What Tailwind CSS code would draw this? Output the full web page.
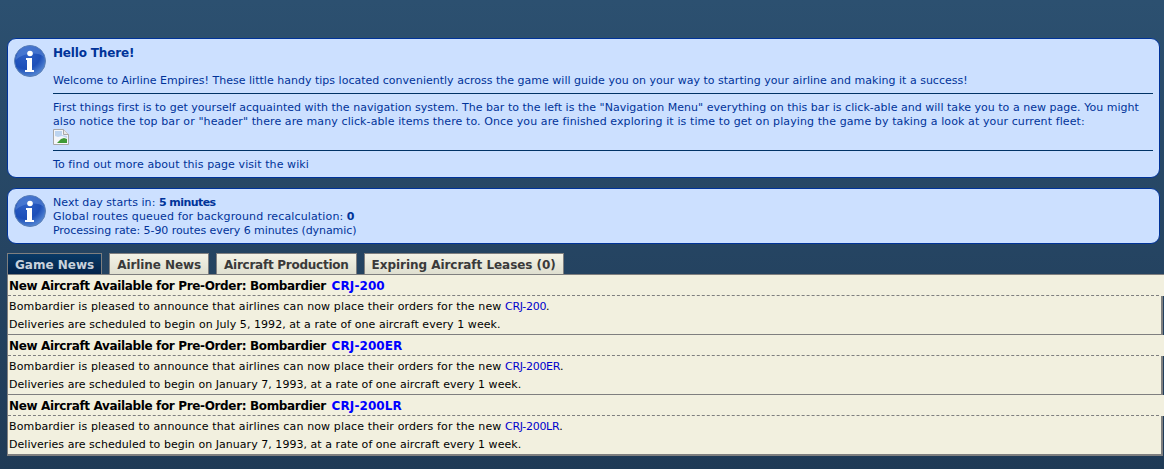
<!DOCTYPE html>
<html><head><meta charset="utf-8"><title>Airline Empires</title>
<script src="https://cdn.jsdelivr.net/npm/@tailwindcss/browser@4"></script></head>
<body class="m-0 h-[469px] overflow-hidden bg-gradient-to-b from-[#2c5070] to-[#1f3a56] font-['DejaVu_Sans',sans-serif] text-[11px] leading-[14px]">
<svg width="0" height="0" class="absolute"><defs>
<radialGradient id="g" cx="0.35" cy="0.25" r="0.9"><stop offset="0" stop-color="#2f62c8"/><stop offset="0.55" stop-color="#1d4fb8"/><stop offset="1" stop-color="#6ea0e0"/></radialGradient>
<symbol id="info" viewBox="0 0 32 32"><circle cx="16" cy="16" r="15.5" fill="url(#g)" stroke="#5b7fb5" stroke-width="1"/><path d="M2 15C8 8 24 6 30 12C28 3 20 1 16 1C8 1 2 7 2 15Z" fill="#5d8bd8" opacity=".55"/><circle cx="16" cy="8.500" r="2.800" fill="#fff"/><path d="M12 13h6v12h2v2h-9v-2h2v-10h-1z" fill="#fff"/></symbol>
</defs></svg>
<main class="pt-[38px] pl-[7px] pr-[4px]">
  <section class="flex h-[140px] rounded-[9px] border border-[#003399] bg-[#cce0ff] text-[#003399]">
    <svg class="ml-[6px] mt-[6px] size-8 shrink-0"><use href="#info"/></svg>
    <div class="ml-[7px] mr-[6px] flex-1 pt-[6px]">
      <h1 class="text-[12px] font-bold leading-4 tracking-[-0.17px]">Hello There!</h1>
      <p class="mt-[13px] tracking-[0.012px]">Welcome to Airline Empires! These little handy tips located conveniently across the game will guide you on your way to starting your airline and making it a success!</p>
      <hr class="mt-[5px] border-t border-[#003366]">
      <p class="mt-[7px]"><span class="block whitespace-nowrap tracking-[0.026px]">First things first is to get yourself acquainted with the navigation system. The bar to the left is the "Navigation Menu" everything on this bar is click-able and will take you to a new page. You might</span><span class="block whitespace-nowrap tracking-[0.1px]">also notice the top bar or "header" there are many click-able items there to. Once you are finished exploring it is time to get on playing the game by taking a look at your current fleet:</span></p>
      <svg class="block size-4" viewBox="0 0 16 16"><path d="M.5.5h10l5 5v10H.5z" fill="#f4f6fa" stroke="#a8a8a8"/><path d="M10.500.5v5h5" fill="#e8e8e8" stroke="#a8a8a8"/><path d="M2 2h7v4l5 1v2L9 7 5 8 2 7z" fill="#bcd4f0"/><path d="M4 14l4-4 3-1 3 1v4z" fill="#3f9a35"/></svg>
      <hr class="mt-[5px] border-t border-[#003366]">
      <p class="mt-[7px] tracking-[0.085px]">To find out more about this page visit the wiki</p>
    </div>
  </section>
  <section class="mt-[10px] flex h-[56px] rounded-[9px] border border-[#003399] bg-[#cce0ff] text-[#003399]">
    <svg class="ml-[6px] mt-[6px] size-8 shrink-0"><use href="#info"/></svg>
    <div class="ml-[7px] pt-[7px]">
      <p><span class="tracking-[0.05px]">Next day starts in:</span> <b class="tracking-[-0.55px]">5 minutes</b></p>
      <p><span class="tracking-[0.137px]">Global routes queued for background recalculation:</span> <b>0</b></p>
      <p class="tracking-[-0.07px]">Processing rate: 5-90 routes every 6 minutes (dynamic)</p>
    </div>
  </section>
  <nav class="mt-[9px] flex h-[21px] gap-[7px] text-[12px] font-bold leading-[22px]">
    <a class="flex items-center border border-b-0 border-[#7f7f7f] bg-gradient-to-b from-[#0a3a66] to-[#03234a] px-[7px] pt-px text-[#c8d2dc]">Game News</a>
    <a class="flex items-center border border-b-0 border-[#7f7f7f] bg-gradient-to-b from-[#f4f3e6] to-[#dfdfd0] px-[7px] pt-px tracking-[-0.08px] text-[#3a3a3a]">Airline News</a>
    <a class="flex items-center border border-b-0 border-[#7f7f7f] bg-gradient-to-b from-[#f4f3e6] to-[#dfdfd0] px-[7px] pt-px tracking-[-0.26px] text-[#3a3a3a]">Aircraft Production</a>
    <a class="flex items-center border border-b-0 border-[#7f7f7f] bg-gradient-to-b from-[#f4f3e6] to-[#dfdfd0] px-[7px] pt-px tracking-[-0.04px] text-[#3a3a3a]">Expiring Aircraft Leases (0)</a>
  </nav>
  <div class="-mr-[4px] border-t border-l border-[#7f7f7f] text-black">
    <article>
      <div class="h-[21px] bg-[#f2f0df]"><h2 class="mr-[5px] h-[21px] border-b border-dashed border-[#7f7f7f] pl-px pt-px text-[12px] font-bold leading-5 tracking-[-0.35px]">New Aircraft Available for Pre-Order: Bombardier <a class="ml-[2px] tracking-[0.1px] text-[#0000ff]">CRJ-200</a></h2></div>
      <div class="mr-px h-[39px] border-r-2 border-b border-[#7f7f7f] bg-[#f2f0df] pl-px pt-[2px] leading-[18px]">
        <p class="tracking-[0.13px]">Bombardier is pleased to announce that airlines can now place their orders for the new <a class="tracking-[-0.3px] text-[#0000cc]">CRJ-200</a>.</p>
        <p class="tracking-[0.055px]">Deliveries are scheduled to begin on July 5, 1992, at a rate of one aircraft every 1 week.</p>
      </div>
    </article>
    <article>
      <div class="h-[21px] bg-[#f2f0df]"><h2 class="mr-[5px] h-[21px] border-b border-dashed border-[#7f7f7f] pl-px pt-px text-[12px] font-bold leading-5 tracking-[-0.35px]">New Aircraft Available for Pre-Order: Bombardier <a class="ml-[2px] tracking-[0.1px] text-[#0000ff]">CRJ-200ER</a></h2></div>
      <div class="mr-px h-[39px] border-r-2 border-b border-[#7f7f7f] bg-[#f2f0df] pl-px pt-[2px] leading-[18px]">
        <p class="tracking-[0.13px]">Bombardier is pleased to announce that airlines can now place their orders for the new <a class="tracking-[-0.3px] text-[#0000cc]">CRJ-200ER</a>.</p>
        <p class="tracking-[0.04px]">Deliveries are scheduled to begin on January 7, 1993, at a rate of one aircraft every 1 week.</p>
      </div>
    </article>
    <article>
      <div class="h-[21px] bg-[#f2f0df]"><h2 class="mr-[5px] h-[21px] border-b border-dashed border-[#7f7f7f] pl-px pt-px text-[12px] font-bold leading-5 tracking-[-0.35px]">New Aircraft Available for Pre-Order: Bombardier <a class="ml-[2px] tracking-[0.1px] text-[#0000ff]">CRJ-200LR</a></h2></div>
      <div class="mr-px h-[40px] border-r-2 border-b-2 border-[#7f7f7f] bg-[#f2f0df] pl-px pt-[2px] leading-[18px]">
        <p class="tracking-[0.13px]">Bombardier is pleased to announce that airlines can now place their orders for the new <a class="tracking-[-0.3px] text-[#0000cc]">CRJ-200LR</a>.</p>
        <p class="tracking-[0.04px]">Deliveries are scheduled to begin on January 7, 1993, at a rate of one aircraft every 1 week.</p>
      </div>
    </article>
  </div>
</main>
</body></html>
